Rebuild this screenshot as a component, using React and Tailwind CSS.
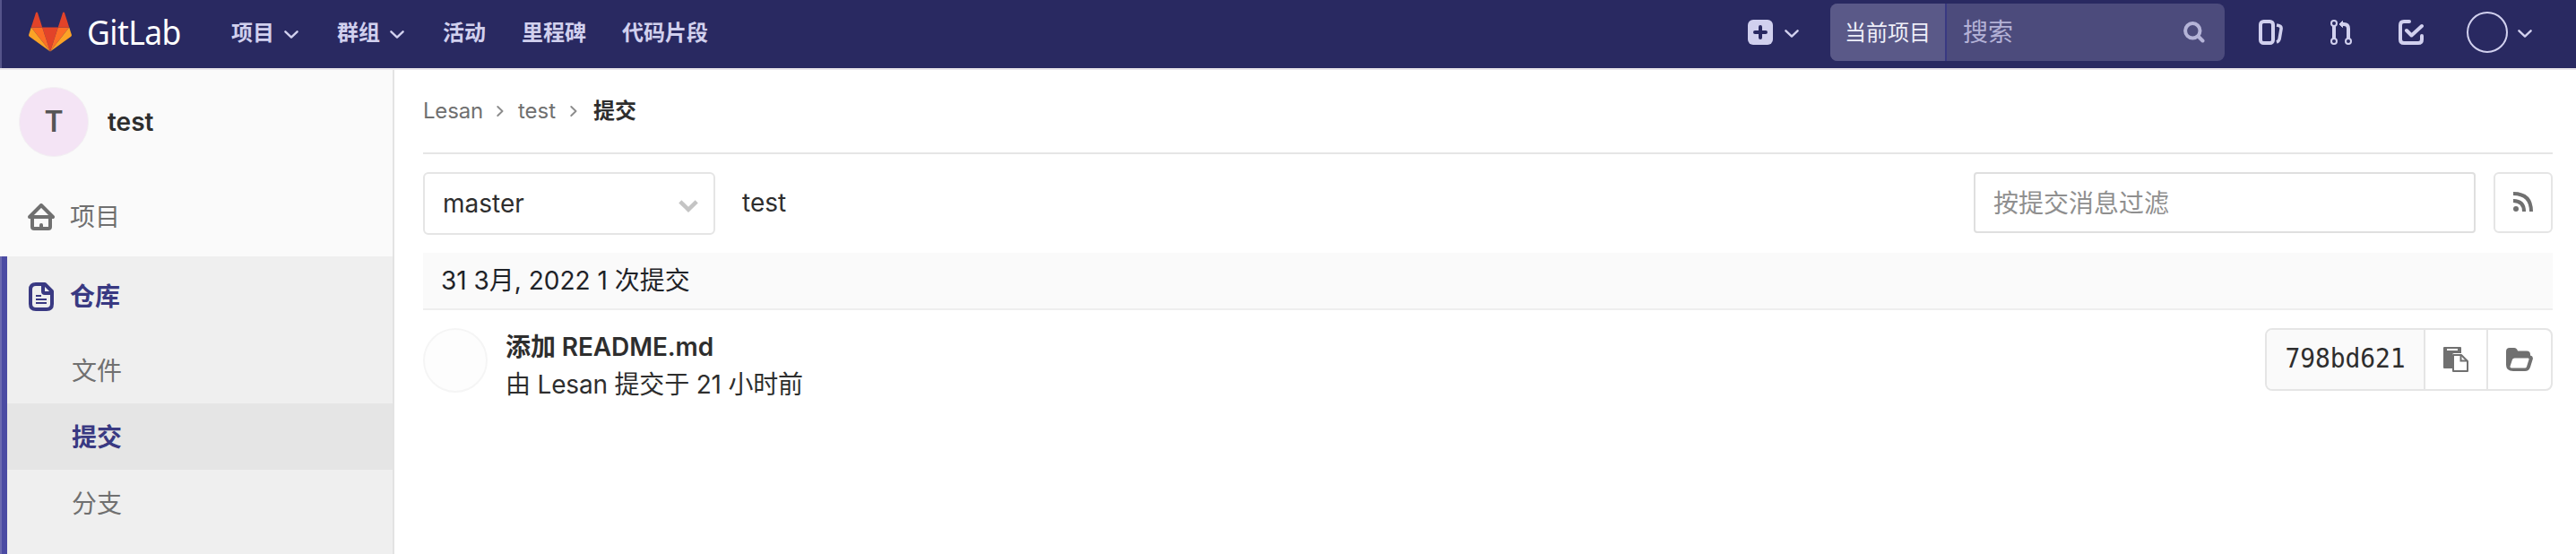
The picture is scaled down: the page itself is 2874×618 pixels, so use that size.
function Chevron({ className }) {
  return (
    <svg viewBox="0 0 16 9" className={className} fill="none" stroke="#d1d0ee" strokeWidth="2.4" strokeLinecap="round" strokeLinejoin="round">
      <path d="M1.4 1.3 8 7.6l6.6-6.3" />
    </svg>
  );
}

function Tanuki() {
  return (
    <svg viewBox="0 0 48 45" className="h-[45px] w-[48px] shrink-0">
      <path d="M24 44.5 15.2 17.5h17.6z" fill="#e24329" />
      <path d="M24 44.5 15.2 17.5H2.8z" fill="#fc6d26" />
      <path d="M24 44.5 32.8 17.5h12.4z" fill="#fc6d26" />
      <path d="M2.8 17.5.1 25.7c-.2.8 0 1.5.7 2L24 44.5z" fill="#fca326" />
      <path d="M45.2 17.5l2.7 8.2c.2.8 0 1.5-.7 2L24 44.5z" fill="#fca326" />
      <path d="M2.8 17.5h12.4L9.9 1.1c-.3-.8-1.5-.8-1.8 0z" fill="#e24329" />
      <path d="M45.2 17.5H32.8L38.1 1.1c.3-.8 1.5-.8 1.8 0z" fill="#e24329" />
    </svg>
  );
}

function Crumb() {
  return (
    <svg viewBox="0 0 8 14" className="h-[14px] w-[8px]" fill="none" stroke="#8c8c8c" strokeWidth="1.9" strokeLinecap="round" strokeLinejoin="round">
      <path d="M1.3 2 6.5 7l-5.2 5" />
    </svg>
  );
}

function Header() {
  return (
    <header className="flex h-[78px] items-start border-b-2 border-[#e8e4ea] bg-[#292961] text-[24px] leading-[36px] font-bold text-[#d1d0ee]">
      <div className="h-[76px] w-[2px] bg-[#55548a]" />
      <div className="flex h-[76px] items-start pt-[13px] pl-[30px]">
        <Tanuki />
        <span className="mt-[-4px] ml-[17px] w-[107px] origin-left scale-x-[0.935] font-['Noto_Sans',sans-serif] text-[38px] leading-[52px] font-normal tracking-[-0.6px] whitespace-nowrap text-white">GitLab</span>
      </div>
      <nav className="flex h-[76px] items-center pb-[2px] pl-[54px] whitespace-nowrap">
        <span>项目</span>
        <Chevron className="mt-[2px] ml-[11px] h-[9px] w-[16px]" />
        <span className="ml-[43px]">群组</span>
        <Chevron className="mt-[2px] ml-[11px] h-[9px] w-[16px]" />
        <span className="ml-[43px]">活动</span>
        <span className="ml-[40px]">里程碑</span>
        <span className="ml-[40px]">代码片段</span>
      </nav>
      <div className="ml-auto flex h-[72px] items-center">
        <svg viewBox="0 0 28 28" className="h-[28px] w-[28px]">
          <rect width="28" height="28" rx="6" fill="#d1d0ee" />
          <path d="M14 8v12M8 14h12" stroke="#292961" strokeWidth="4" strokeLinecap="round" />
        </svg>
        <Chevron className="mt-[3px] ml-[13px] h-[9px] w-[16px]" />
        <div className="ml-[35px] flex h-[64px] w-[440px] overflow-hidden rounded-[8px] bg-[#4c4b7c] font-normal">
          <div className="flex w-[130px] items-center justify-center border-r-2 border-[#393982] bg-[#5a5988] pt-[2px] text-[24px] whitespace-nowrap text-[#eeeef8]">当前项目</div>
          <div className="flex flex-1 items-center pr-[22px] pl-[18px] text-[28px] text-[#b3b1d6]">
            <span>搜索</span>
            <svg viewBox="0 0 24 24" className="ml-auto h-[24px] w-[24px]" fill="none" stroke="#b5b4d8" strokeWidth="4" strokeLinecap="round">
              <circle cx="10.3" cy="10.3" r="8.2" />
              <path d="m16.5 16.5 5 5" />
            </svg>
          </div>
        </div>
        <svg viewBox="0 0 28 28" className="ml-[38px] h-[28px] w-[28px]" fill="none" stroke="#d1d0ee">
          <rect x="2" y="2" width="14" height="24" rx="3.5" strokeWidth="4" />
          <path d="M20 6c4 .7 5.500 1.700 5 4.500l-1.800 10.500c-.4 2.400-1 3.200-3.200 4" strokeWidth="3.600" />
        </svg>
        <svg viewBox="0 0 24 30" className="ml-[52px] h-[30px] w-[24px]" fill="none" stroke="#d1d0ee">
          <circle cx="4" cy="5" r="3" strokeWidth="2" />
          <circle cx="4" cy="25" r="3" strokeWidth="2" />
          <circle cx="20" cy="25" r="3" strokeWidth="2" />
          <path d="M4 8v14" strokeWidth="4" />
          <path d="M20 22V11q0-5-5-5h-3" strokeWidth="4" />
          <path d="M10 6l3.500-3.500v7z" fill="#d1d0ee" strokeLinejoin="round" />
        </svg>
        <svg viewBox="0 0 28 28" className="ml-[52px] h-[28px] w-[28px]" fill="none" stroke="#d1d0ee" strokeWidth="4" strokeLinecap="round" strokeLinejoin="round">
          <path d="M12 2H6q-4 0-4 4v16q0 4 4 4h16q4 0 4-4v-4" />
          <path d="m9 12 5.500 5.500L26 7" />
        </svg>
        <div className="ml-[48px] h-[46px] w-[46px] rounded-full border-2 border-[#d1d0ee]" />
        <Chevron className="mt-[3px] mr-[49px] ml-[11px] h-[9px] w-[16px]" />
      </div>
    </header>
  );
}

function Sidebar() {
  return (
    <aside className="flex w-[440px] shrink-0 flex-col border-r-2 border-[#e3e3e3] bg-[#fafafa] text-[28px] text-[#707070]">
      <div className="flex h-[116px] items-center pl-[21px]">
        <div className="flex h-[78px] w-[78px] items-center justify-center rounded-full border border-[#f3f0f3] bg-[#f4e4f5] text-[32px] font-semibold text-[#555]">T</div>
        <span className="ml-[21px] text-[28px] font-semibold text-[#2e2e2e]">test</span>
      </div>
      <div className="flex h-[92px] items-center pt-[4px] pl-[31px]">
        <svg viewBox="0 0 30 30" className="h-[30px] w-[30px]" fill="none" stroke="#707070" strokeWidth="4" strokeLinecap="round" strokeLinejoin="round">
          <path d="M2 15 15 2l13 13z" />
          <path d="M5 15v11q0 2 2 2h16q2 0 2-2V15M15 24v4" />
        </svg>
        <span className="ml-[17px]">项目</span>
      </div>
      <div className="flex flex-1">
        <div className="w-[2px] bg-[#6a69b0]" />
        <div className="w-[6px] bg-[#4b4ba3]" />
        <div className="flex flex-1 flex-col bg-[#efefef]">
          <div className="flex h-[90px] items-center pl-[24px] font-bold text-[#393982]">
            <svg viewBox="0 0 28 32" className="h-[32px] w-[28px]" fill="none" stroke="#393982" strokeLinejoin="round">
              <path d="M8 2h10l8 8v14q0 6-6 6H8q-6 0-6-6V8q0-6 6-6z" strokeWidth="4" />
              <path d="M16 3v7q0 2 2 2h8" strokeWidth="4" />
              <path d="M8 15h6M8 19h12M8 23h12" strokeWidth="2" />
            </svg>
            <span className="ml-[18px]">仓库</span>
          </div>
          <div className="flex h-[74px] items-center pt-[2px] pl-[72px]">文件</div>
          <div className="flex h-[74px] items-center bg-[#e5e5e5] pt-[1px] pl-[72px] font-bold text-[#393982]">提交</div>
          <div className="flex h-[74px] items-center pt-[1px] pl-[72px]">分支</div>
        </div>
      </div>
    </aside>
  );
}

function Content() {
  return (
    <main className="flex flex-1 flex-col pr-[26px] pl-[32px] text-[28px] text-[#2e2e2e]">
      <div className="flex h-[94px] items-center border-b-2 border-[#e5e5e5] text-[24px] text-[#707070]">
        <span className="w-[67px] tracking-[-0.2px]">Lesan</span>
        <span className="ml-[15px]"><Crumb /></span>
        <span className="ml-[16px] w-[44px]">test</span>
        <span className="ml-[14px]"><Crumb /></span>
        <span className="ml-[18px] font-bold text-[#2e2e2e]">提交</span>
      </div>
      <div className="mt-[20px] flex h-[70px] items-start">
        <div className="flex h-[70px] w-[326px] items-center justify-between rounded-[6px] border-2 border-[#e5e5e5] pr-[17px] pl-[20px]">
          <span>master</span>
          <svg viewBox="0 0 22 14" className="mt-[6px] h-[14px] w-[22px]" fill="none" stroke="#c4c4c4" strokeWidth="4.5">
            <path d="M1.800 1.800 11 10.800l9.200-9" />
          </svg>
        </div>
        <span className="ml-[30px] leading-[68px]">test</span>
        <div className="ml-auto flex h-[68px] w-[560px] items-center rounded-[4px] border-2 border-[#dfdfdf] pt-[2px] pl-[20px] text-[28px] text-[#8f8f8f]">按提交消息过滤</div>
        <div className="ml-[20px] flex h-[68px] w-[66px] items-center justify-center rounded-[6px] border-2 border-[#e5e5e5] pb-[2px]">
          <svg viewBox="0 0 22 22" className="h-[22px] w-[22px]" fill="none" stroke="#707070" strokeWidth="4">
            <circle cx="3" cy="19" r="3" fill="#707070" stroke="none" />
            <path d="M0 10q12 0 12 12M0 2q20 0 20 20" />
          </svg>
        </div>
      </div>
      <div className="mt-[20px] h-[64px] border-b-2 border-[#eee] bg-[#fafafa] pl-[20px] leading-[62px] text-[#1f2328]">31 3月, 2022 1 次提交</div>
      <div className="flex pt-[20px]">
        <div className="h-[72px] w-[72px] rounded-full border-2 border-[#f5f5f5] bg-[#fdfdfd]" />
        <div className="ml-[20px] flex flex-col leading-[42px] whitespace-nowrap">
          <span className="font-semibold tracking-[-0.1px]">添加 README.md</span>
          <span className="tracking-[-0.18px]">由 Lesan 提交于 21 小时前</span>
        </div>
        <div className="ml-auto flex h-[70px] w-[321px] overflow-hidden rounded-[8px] border-2 border-[#e5e5e5]">
          <div className="flex w-[177px] items-center justify-center border-r-2 border-[#e5e5e5] bg-[#fafafa] font-['DejaVu_Sans_Mono',monospace] text-[28px] tracking-[-0.1px]">
            <span className="scale-y-[1.05]">798bd621</span>
          </div>
          <div className="flex w-[70px] items-center justify-center border-r-2 border-[#e5e5e5]">
            <svg viewBox="0 0 28 28" className="h-[28px] w-[28px]">
              <path d="M1 0h18q1 0 1 1v6h-8q-2 0-2 2v15H1q-1 0-1-1V1q0-1 1-1z" fill="#707070" />
              <path d="M4 2h12v2H4z" fill="#fff" />
              <path d="M11 9h9l7 7v11H11z" fill="#fff" stroke="#707070" strokeWidth="2" strokeLinejoin="round" />
              <path d="M19.500 9v6.500H27" fill="none" stroke="#707070" strokeWidth="2" />
            </svg>
          </div>
          <div className="flex flex-1 items-center justify-center">
            <svg viewBox="0 0 30 26" className="h-[26px] w-[30px]">
              <path d="M0 4q0-4 4-4h5q3 0 4 3.500h10q4 0 4 4v1q4 1 2.500 5l-2.500 8q-1.500 4.500-6 4.500H8q-8 0-8-7z" fill="#707070" />
              <path d="M9.500 11.500h15q1.500 0 1 1.500l-2.500 8q-.5 1.500-2 1.500H6q-2 0-1.500-2l2.500-7.500q.5-1.500 2.500-1.500z" fill="#fff" />
            </svg>
          </div>
        </div>
      </div>
    </main>
  );
}

export default function App() {
  return (
    <div className="flex h-[618px] w-[2874px] flex-col overflow-hidden bg-white font-['Inter','Noto_Sans_CJK_SC',sans-serif]">
      <Header />
      <div className="flex flex-1">
        <Sidebar />
        <Content />
      </div>
    </div>
  );
}
